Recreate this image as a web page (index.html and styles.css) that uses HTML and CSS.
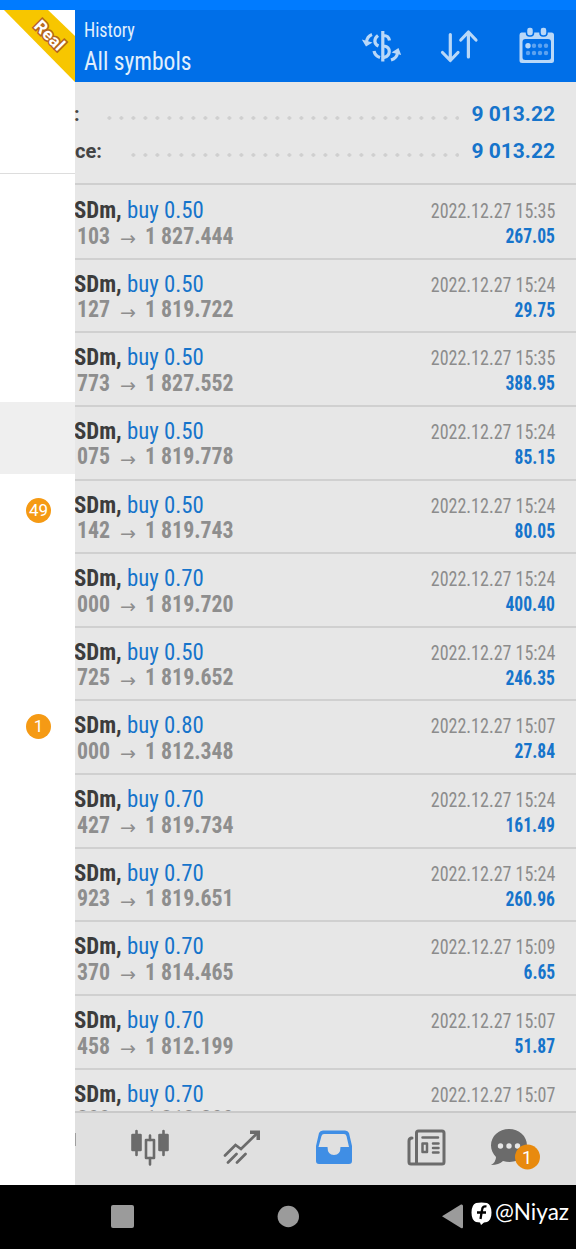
FILE: index.html
```html
<!DOCTYPE html>
<html lang="en">
<head>
<meta charset="UTF-8">
<meta name="viewport" content="width=device-width, initial-scale=1.0">
<title>History</title>
<link rel="stylesheet" href="styles.css">
</head>
<body>
<div class="status"></div>
<div class="app">
  <aside class="drawer">
    <div class="account">
      <svg class="ribbon" width="75" height="73" viewBox="0 10 75 73">
        <path d="M4 10H48L75 36V82z" fill="#f7c600"/>
        <text class="real" transform="translate(33 27) rotate(45)" textLength="35" lengthAdjust="spacingAndGlyphs">Real</text>
      </svg>
    </div>
    <div class="item first"></div>
    <div class="item active"></div>
    <div class="item"><span class="badge">49</span></div>
    <div class="item"></div>
    <div class="item"></div>
    <div class="item"><span class="badge">1</span></div>
  </aside>
  <main class="screen">
    <header class="bar">
      <div class="titles"><p class="title">History</p><p class="sub">All symbols</p></div>
      <svg class="tool" width="42" height="40" viewBox="360 26 42 40" fill="none" stroke="#b9d8f8" stroke-width="3.2">
        <path d="M382.800 31V61.500M389.500 40.500C388.500 35 385 35.500 382.800 35.500M378 35.500C373.500 39 374 44 378.500 46M384 46C391 47 391 55.500 384 57.500M374 51Q375 56 380 57.500"/>
        <path stroke-width="3" d="M372 34.500Q367 36.500 366.500 42M391 60Q397 58 397.500 53"/>
        <path d="M361.800 39.500L366 46.500L372.500 42.500zM391.500 52.500L398.500 48L401.200 55z" fill="#b9d8f8" stroke="none"/>
      </svg>
      <svg class="tool sort" width="40" height="40" viewBox="440 26 40 40" fill="none" stroke="#b9d8f8" stroke-width="3.2" stroke-linecap="round" stroke-linejoin="round">
        <path d="M450.300 34.500V60.500M442.500 52.500L450.300 60.500L458 52.500M468.400 57V32M460.800 40L468.400 32L476 40"/>
      </svg>
      <svg class="tool cal" width="36" height="40" viewBox="519 26 36 40">
        <path fill="#b9d8f8" fill-rule="evenodd" d="M521.500 32.500H551.500Q554 32.500 554 35V60.500Q554 63 551.500 63H522Q519.500 63 519.500 60.500V35Q519.500 32.500 521.500 32.500zM525.500 39Q522.500 39 522.500 42V57.500Q522.500 60 525.500 60H548Q551 60 551 57.500V42Q551 39 548 39z"/>
        <g fill="#b9d8f8" stroke="#006fe8" stroke-width="1.500"><rect x="526.500" y="27" width="7" height="9" rx="3"/><rect x="540" y="27" width="7" height="9" rx="3"/></g>
        <circle cx="528" cy="45.800" r="2.700" fill="#b9d8f8"/>
        <g fill="#5da3f0"><circle cx="534" cy="45.800" r="2.200"/><circle cx="540" cy="45.800" r="2.200"/><circle cx="546" cy="45.800" r="2.200"/><circle cx="528" cy="53" r="2.200"/><circle cx="534" cy="53" r="2.200"/><circle cx="540" cy="53" r="2.200"/><circle cx="546" cy="53" r="2.200"/></g>
      </svg>
    </header>
    <section class="totals">
      <div class="total"><b class="label profit">:</b><i class="dots"></i><b class="sum">9 013.22</b></div>
      <div class="total"><b class="label">ce:</b><i class="dots"></i><b class="sum">9 013.22</b></div>
    </section>
    <ul class="deals">
      <li><p><b>SDm,</b><span>buy 0.50</span><time>2022.12.27 15:35</time></p><p class="price"><b>103</b><i>→</i><b>1 827.444</b><strong>267.05</strong></p></li>
      <li><p><b>SDm,</b><span>buy 0.50</span><time>2022.12.27 15:24</time></p><p class="price"><b>127</b><i>→</i><b>1 819.722</b><strong>29.75</strong></p></li>
      <li><p><b>SDm,</b><span>buy 0.50</span><time>2022.12.27 15:35</time></p><p class="price"><b>773</b><i>→</i><b>1 827.552</b><strong>388.95</strong></p></li>
      <li><p><b>SDm,</b><span>buy 0.50</span><time>2022.12.27 15:24</time></p><p class="price"><b>075</b><i>→</i><b>1 819.778</b><strong>85.15</strong></p></li>
      <li><p><b>SDm,</b><span>buy 0.50</span><time>2022.12.27 15:24</time></p><p class="price"><b>142</b><i>→</i><b>1 819.743</b><strong>80.05</strong></p></li>
      <li><p><b>SDm,</b><span>buy 0.70</span><time>2022.12.27 15:24</time></p><p class="price"><b>000</b><i>→</i><b>1 819.720</b><strong>400.40</strong></p></li>
      <li><p><b>SDm,</b><span>buy 0.50</span><time>2022.12.27 15:24</time></p><p class="price"><b>725</b><i>→</i><b>1 819.652</b><strong>246.35</strong></p></li>
      <li><p><b>SDm,</b><span>buy 0.80</span><time>2022.12.27 15:07</time></p><p class="price"><b>000</b><i>→</i><b>1 812.348</b><strong>27.84</strong></p></li>
      <li><p><b>SDm,</b><span>buy 0.70</span><time>2022.12.27 15:24</time></p><p class="price"><b>427</b><i>→</i><b>1 819.734</b><strong>161.49</strong></p></li>
      <li><p><b>SDm,</b><span>buy 0.70</span><time>2022.12.27 15:24</time></p><p class="price"><b>923</b><i>→</i><b>1 819.651</b><strong>260.96</strong></p></li>
      <li><p><b>SDm,</b><span>buy 0.70</span><time>2022.12.27 15:09</time></p><p class="price"><b>370</b><i>→</i><b>1 814.465</b><strong>6.65</strong></p></li>
      <li><p><b>SDm,</b><span>buy 0.70</span><time>2022.12.27 15:07</time></p><p class="price"><b>458</b><i>→</i><b>1 812.199</b><strong>51.87</strong></p></li>
      <li><p><b>SDm,</b><span>buy 0.70</span><time>2022.12.27 15:07</time></p><p class="price"><b>800</b><i>→</i><b>1 812.200</b></p></li>
    </ul>
    <nav class="tabs">
      <svg width="501" height="72" viewBox="75 1113 501 72">
        <path d="M75 1133V1146" stroke="#8a8a8a" stroke-width="1.500"/>
        <g stroke="#6b6b6b" stroke-width="2.600" stroke-linecap="round" stroke-linejoin="round">
          <path d="M136.500 1131V1155M163.500 1131V1155M150 1135.500V1140M150 1158V1164.500"/>
          <path fill="#6b6b6b" d="M132.500 1135H140.500V1150H132.500zM159.500 1135H167.500V1150H159.500z"/>
          <path fill="none" d="M146 1140H154V1158H146z"/>
        </g>
        <g fill="none" stroke="#6b6b6b" stroke-width="2.700" stroke-linecap="round">
          <path d="M225 1155.500L235.500 1145L241 1149L257.500 1133M228 1162.500L236.500 1154M237 1162.500L245.500 1154"/>
        </g>
        <path d="M250 1130.500H260V1140H256.500V1134H250z" fill="#6b6b6b"/>
        <path fill="#3f8ee5" fill-rule="evenodd" d="M323 1130.500H345Q348 1130.500 349 1133L352 1146V1161Q352 1164 349 1164H319Q316 1164 316 1161V1146L319 1133Q320 1130.500 323 1130.500zM324 1134Q322 1134 321.500 1136L318.500 1147H327.500Q327.500 1155 334 1155Q340.500 1155 340.500 1147H349L346.500 1136Q346 1134 344 1134z"/>
        <g fill="none" stroke="#6b6b6b" stroke-width="3" stroke-linejoin="round" stroke-linecap="round">
          <path d="M416.500 1164V1133Q416.500 1131 418.500 1131H442Q444 1131 444 1133V1162Q444 1164 442 1164H411Q409 1164 409 1162V1141Q409 1138 412 1138"/>
          <path stroke-width="2.500" d="M422.500 1137.500H438M422.500 1143.500H427V1152H422.500zM433 1143.500H438.500M433 1148H438.500M433 1152.500H438.500"/>
        </g>
        <path fill="#6b6b6b" d="M509 1129C499 1129 491 1136 491 1145.500C491 1150 493 1154 496 1157Q496 1162 491 1165Q499 1165 503 1161C517 1165 527 1156 527 1145.500C527 1136 519 1129 509 1129z"/>
        <g fill="#e6e6e6"><circle cx="500.500" cy="1146" r="2.700"/><circle cx="509" cy="1146" r="2.700"/><circle cx="517.500" cy="1146" r="2.700"/></g>
        <circle cx="527.500" cy="1157" r="12.500" fill="#e88a0e"/>
        <text class="count" x="527" y="1163.500" text-anchor="middle">1</text>
      </svg>
    </nav>
  </main>
</div>
<footer class="system">
  <svg width="576" height="64" viewBox="0 1185 576 64">
    <rect x="111" y="1205" width="23" height="23" rx="2" fill="#9b9b9b"/>
    <circle cx="288.300" cy="1216.500" r="10.700" fill="#9b9b9b"/>
    <path d="M442 1216.300L461 1204.500Q463 1204 463 1206V1227Q463 1229 461 1228z" fill="#9b9b9b"/>
    <path fill="#fff" d="M476 1203Q481.500 1202 487 1203Q491.500 1205 491.500 1212.500Q491.500 1220 487 1222L484 1222.500L481 1225L480 1222.500L476 1222Q471.500 1220 471.500 1212.500Q471.500 1205 476 1203z"/>
    <path d="M486.500 1206.500Q482.500 1205.500 482 1210L480.500 1219M477 1212.500H486" stroke="#000" stroke-width="2.300" fill="none"/>
    <text class="handle" x="495" y="1220" textLength="74" lengthAdjust="spacingAndGlyphs">@Niyaz</text>
  </svg>
</footer>
</body>
</html>
```
FILE: styles.css
```css
*{box-sizing:border-box;margin:0;padding:0;}
body{width:576px;height:1249px;overflow:hidden;display:flex;flex-direction:column;font-family:"Roboto Condensed",Roboto,sans-serif;font-stretch:75%;background:#000;}
svg{display:block;}
.status{height:10px;background:#007bff;}
.app{height:1175px;display:flex;}
.drawer{width:75px;background:#fff;}
.account{height:164px;border-bottom:1px solid #ddd;}
.item{height:72px;display:flex;align-items:center;padding-left:26px;}
.item.first{height:228px;}
.item.active{background:#efefef;}
.badge{width:25px;height:25px;border-radius:50%;background:#f59a14;color:#fff;font:17px/25px Roboto,sans-serif;text-align:center;}
.real{font:bold 17px Roboto,sans-serif;fill:#fff;stroke:#b5651d;stroke-width:3px;paint-order:stroke;}
.screen{width:501px;display:flex;flex-direction:column;background:#e7e7e7;}
.bar{height:72px;flex:none;display:flex;padding:0 21px 0 9px;background:#006fe8;color:#e1effd;}
.titles{width:276px;padding-top:9px;}
.title{font-size:20px;line-height:23px;transform:scaleX(.9);transform-origin:left;}
.sub{font-size:26px;line-height:38px;transform:scaleX(.905);transform-origin:left;}
.tool{margin-top:16px;flex:none;}
.sort{margin-left:38px;}
.cal{margin-left:39px;}
.totals{height:103px;flex:none;padding:13px 21px 0 0;border-bottom:2px solid #cfcfcf;font-family:Roboto,sans-serif;font-stretch:100%;}
.total{height:37.5px;display:flex;align-items:center;}
.label{width:51px;font-size:20px;color:#444;}
.label.profit{width:29px;margin-left:-1px;}
.dots{flex:1;height:4px;margin:8px 12px 0 3px;background:radial-gradient(circle at 10px 2px,#cfcfcf 1.5px,transparent 2.1px) right/12px 4px;}
.sum{font-size:21px;color:#1674cb;}
.deals{flex:1;overflow:hidden;list-style:none;padding-top:1px;}
.deals li{height:73.65px;padding:11px 21px 0 0;border-bottom:2px solid #d0d0d0;}
.deals p{height:26px;display:flex;align-items:center;font-size:24px;white-space:nowrap;}
.deals b,.deals span{transform:scaleX(.91);transform-origin:left;}
.deals p>b:first-child{width:53px;margin-left:-1px;color:#3c3c3c;transform:scaleX(.95);}
.deals span{color:#1674cb;transform:scaleX(.95);}
.deals time{margin-left:auto;padding-top:2px;font-size:20px;color:#8c8c8c;transform:scaleX(.9);transform-origin:right;}
.deals .price{height:25px;color:#8e8e8e;padding-left:3px;}
.deals .price>b:first-child{width:43px;color:#8e8e8e;transform:scaleX(.91);}
.deals i{width:25px;padding-top:5px;font:19px/20px "DejaVu Sans",sans-serif;}
.deals strong{margin-left:auto;padding-top:2px;font-size:19.5px;color:#1674cb;transform:scaleX(.9);transform-origin:right;}
.tabs{height:74px;flex:none;border-top:2px solid #c9c9c9;background:#e0e0e0;}
.count{font:18px Roboto,sans-serif;fill:#fff;}
.system{height:64px;}
.handle{font:22.5px Lato,sans-serif;fill:#fff;}
```
